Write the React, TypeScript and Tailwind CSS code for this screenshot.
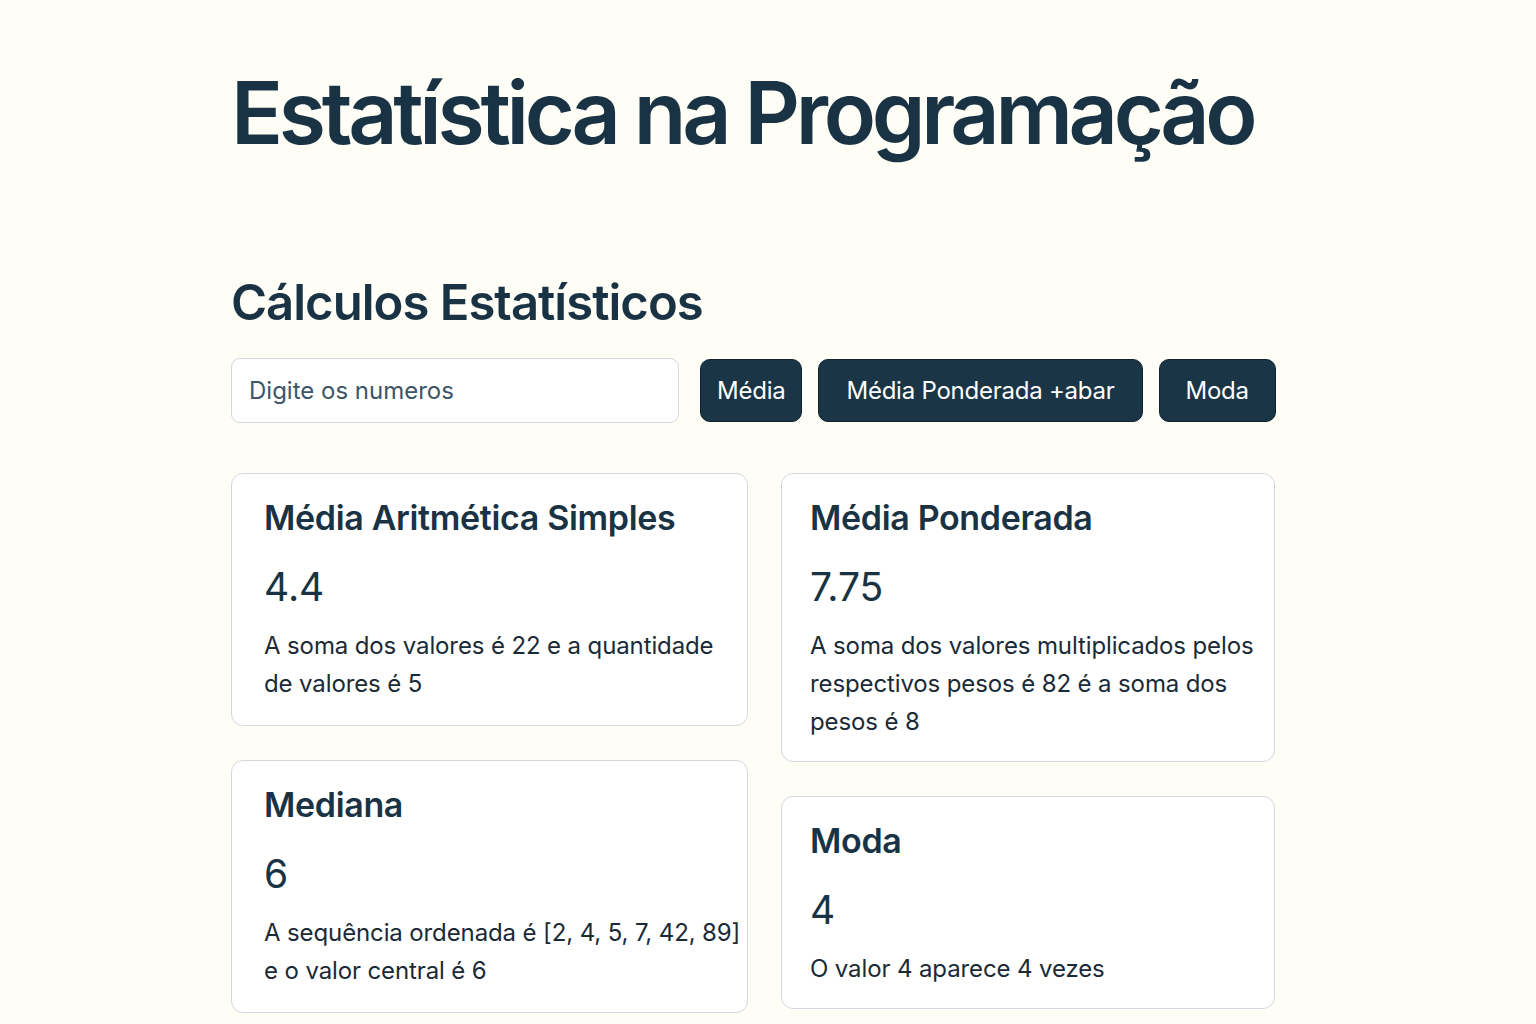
import React, { useState } from 'react';

type Stat = {
  title: string;
  value: string;
  lines: string[];
};

const leftCards: Stat[] = [
  {
    title: 'Média Aritmética Simples',
    value: '4.4',
    lines: ['A soma dos valores é 22 e a quantidade', 'de valores é 5'],
  },
  {
    title: 'Mediana',
    value: '6',
    lines: ['A sequência ordenada é [2, 4, 5, 7, 42, 89]', 'e o valor central é 6'],
  },
];

const rightCards: Stat[] = [
  {
    title: 'Média Ponderada',
    value: '7.75',
    lines: ['A soma dos valores multiplicados pelos', 'respectivos pesos é 82 é a soma dos', 'pesos é 8'],
  },
  {
    title: 'Moda',
    value: '4',
    lines: ['O valor 4 aparece 4 vezes'],
  },
];

const StatCard: React.FC<{ stat: Stat; right?: boolean }> = ({ stat, right }) => (
  <div className={right ? 'bg-white border border-[#d3d8de] rounded-[12px] pl-[28px] pr-6 pt-6 pb-5' : 'bg-white border border-[#d3d8de] rounded-[12px] px-8 pt-6 pb-[22px]'}>
    <h3 className="text-[34px] font-semibold leading-[40px] tracking-[-0.01em] text-[#1a3344]">{stat.title}</h3>
    <div className="mt-[26px] text-[39px] leading-[45px] text-[#1a3344]">{stat.value}</div>
    <p className="mt-[18px] text-[24px] leading-[38px] tracking-[-0.005em] text-[#1a2a36] whitespace-nowrap">
      {stat.lines.map((l, i) => (
        <span key={i} className="block">{l}</span>
      ))}
    </p>
  </div>
);

const btn = 'shrink-0 whitespace-nowrap h-[63px] rounded-[10px] bg-[#1a3545] border border-[#0f2230] text-white text-[24px] tracking-[-0.01em]';

export default function App() {
  const [numbers, setNumbers] = useState('');

  return (
    <div className="min-h-screen bg-[#fefdf6] font-['Inter','Noto_Sans',sans-serif] text-[#1a3344]">
      <div className="w-[1044px] ml-[231px] pt-[70px] pb-10">
        <h1 className="text-[86px] font-semibold leading-none tracking-[-0.05em] whitespace-nowrap">Estatística na Programação</h1>

        <h2 className="mt-[122px] text-[49px] font-semibold leading-none tracking-[-0.02em]">Cálculos Estatísticos</h2>

        <div className="mt-[31px] flex items-center gap-4">
          <input
            value={numbers}
            onChange={e => setNumbers(e.target.value)}
            placeholder="Digite os numeros"
            className="shrink-0 w-[448px] h-[65px] bg-white border border-[#d3d8de] rounded-[9px] px-[17px] text-[24px] text-[#1a3344] placeholder:text-[#3d5567] outline-none"
          />
          <button className={`${btn} ml-[5px] px-[16px]`}>Média</button>
          <button className={`${btn} px-[27px]`}>Média Ponderada +abar</button>
          <button className={`${btn} px-[26px]`}>Moda</button>
        </div>

        <div className="mt-[50px] flex gap-[33px] items-start">
          <div className="w-[517px] flex flex-col gap-[34px]">
            {leftCards.map(c => <StatCard key={c.title} stat={c} />)}
          </div>
          <div className="w-[494px] flex flex-col gap-[34px]">
            {rightCards.map(c => <StatCard key={c.title} stat={c} right />)}
          </div>
        </div>
      </div>
    </div>
  );
}
